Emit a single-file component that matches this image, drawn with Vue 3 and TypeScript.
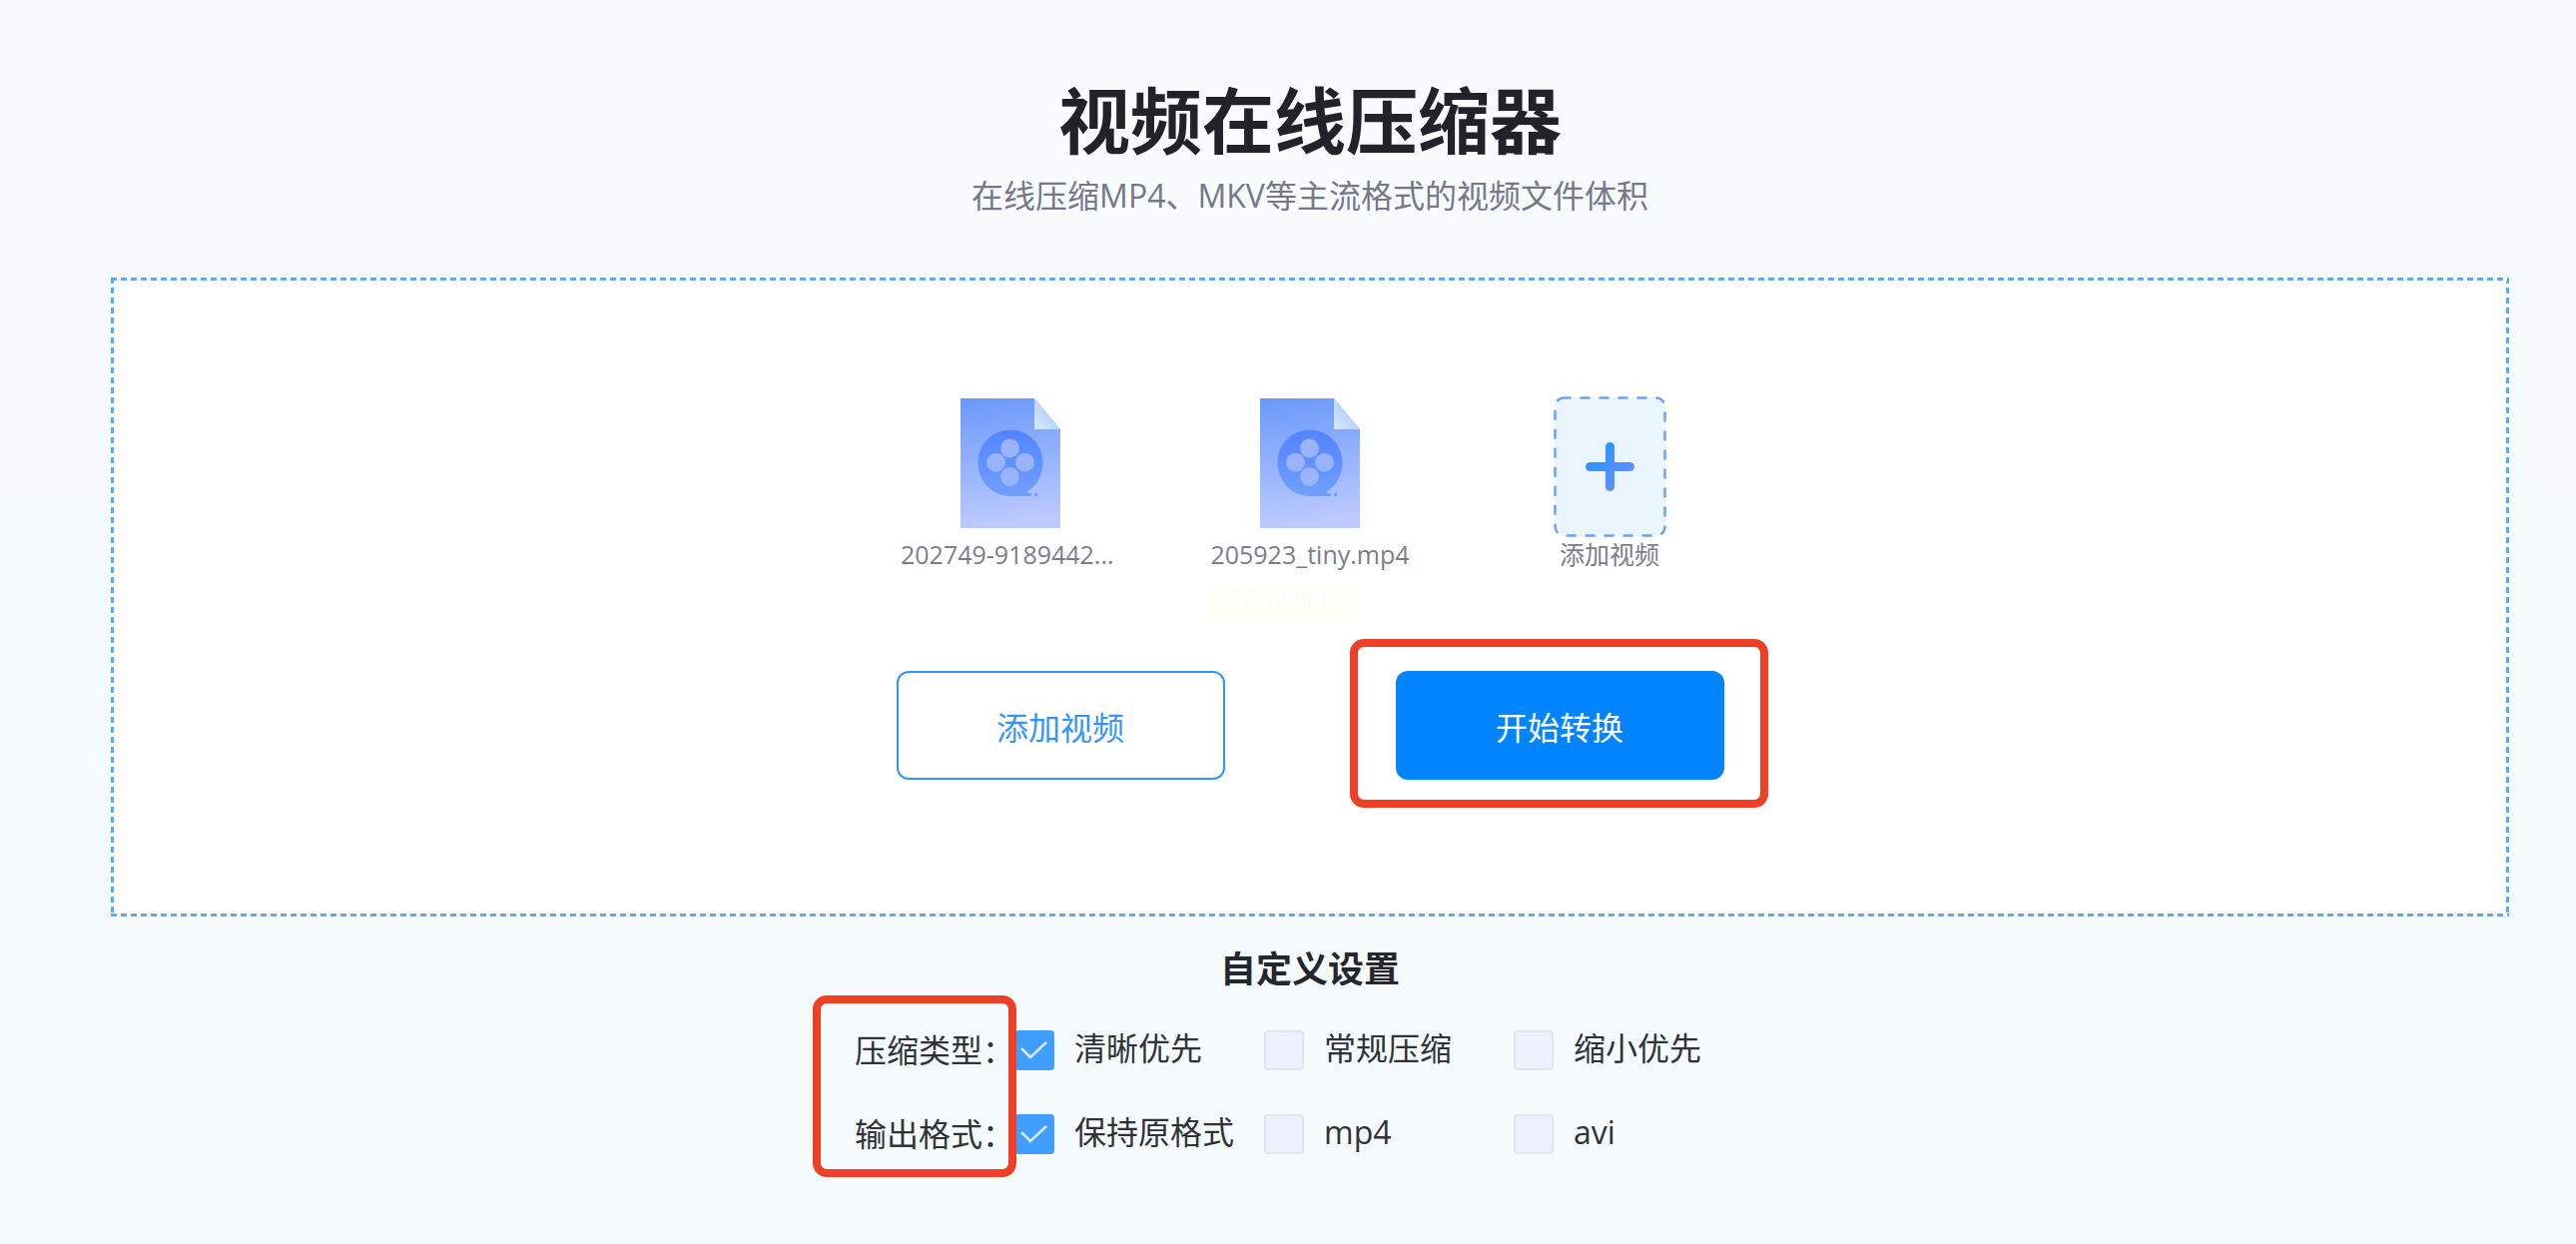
<script setup lang="ts">
import { reactive } from 'vue'

interface VideoFile {
  name: string
  cut?: boolean
  tag?: string
}

interface Setting {
  key: string
  label: string
  options: string[]
}

const files: VideoFile[] = [
  { name: '202749-9189442...', cut: true },
  { name: '205923_tiny.mp4', tag: '1772699088' },
]

const settings: Setting[] = [
  { key: 'type', label: '压缩类型：', options: ['清晰优先', '常规压缩', '缩小优先'] },
  { key: 'format', label: '输出格式：', options: ['保持原格式', 'mp4', 'avi'] },
]

const chosen = reactive<Record<string, string>>({
  type: '清晰优先',
  format: '保持原格式',
})
</script>

<template>
  <main class="page">
    <h1 class="title">视频在线压缩器</h1>
    <p class="subtitle">在线压缩MP4、MKV等主流格式的视频文件体积</p>

    <section class="drop">
      <ul class="files">
        <li v-for="file in files" :key="file.name" class="file">
          <div class="thumb">
            <svg class="doc" viewBox="0 0 100 130" aria-hidden="true">
              <defs>
                <linearGradient id="sheet" x1="0" y1="0" x2="0.1" y2="1">
                  <stop offset="0" stop-color="#6a99fa" />
                  <stop offset="1" stop-color="#bccaff" />
                </linearGradient>
                <linearGradient id="reel" x1="0" y1="0" x2="0" y2="1">
                  <stop offset="0" stop-color="#5384ff" />
                  <stop offset="1" stop-color="#709ffb" />
                </linearGradient>
                <linearGradient id="fold" x1="0" y1="1" x2="0.6" y2="0.4">
                  <stop offset="0" stop-color="#d9eaff" />
                  <stop offset="1" stop-color="#b4d0fd" />
                </linearGradient>
              </defs>
              <path d="M0 0H74L100 31V130H0Z" fill="url(#sheet)" />
              <path d="M74 0L100 31H74Z" fill="url(#fold)" />
              <path
                d="M50 31.500C68 31.500 82.500 46 82.500 64.500C82.500 77 76 88 66.500 93.500Q68 95.500 71 95.500V98H50C32 98 17.500 83 17.500 64.500C17.500 46 32 31.500 50 31.500Z"
                fill="url(#reel)"
              />
              <circle cx="75.500" cy="96.500" r="1.800" fill="#709ffb" />
              <g fill="#99b4fd">
                <circle cx="49.500" cy="50" r="9.400" />
                <circle cx="35.500" cy="64.200" r="9.400" />
                <circle cx="64.500" cy="64.200" r="9.400" />
                <circle cx="49.500" cy="78.500" r="9.400" />
              </g>
            </svg>
          </div>
          <span class="name" :class="{ cut: file.cut }">{{ file.name }}</span>
          <span v-if="file.tag" class="tag">{{ file.tag }}</span>
        </li>
        <li class="file">
          <button class="adder" type="button">
            <svg class="plus" viewBox="0 0 113 141" aria-hidden="true">
              <defs>
                <linearGradient id="cross" x1="32" y1="46" x2="81" y2="95" gradientUnits="userSpaceOnUse">
                  <stop offset="0.100" stop-color="#2196ff" />
                  <stop offset="0.900" stop-color="#6a8dff" />
                </linearGradient>
              </defs>
              <rect x="1" y="1" width="111" height="139" rx="10" fill="#eaf5ff" />
              <rect
                x="1.500" y="1.500" width="110" height="138" rx="9"
                fill="none" stroke="#66a3ff" stroke-width="2.500"
                stroke-dasharray="10 9" stroke-dashoffset="3"
              />
              <path
                d="M56.500 46a4.500 4.500 0 0 1 4.500 4.500V66H76.500a4.500 4.500 0 0 1 0 9H61V90.500a4.500 4.500 0 0 1-9 0V75H36.500a4.500 4.500 0 0 1 0-9H52V50.500a4.500 4.500 0 0 1 4.500-4.500Z"
                fill="url(#cross)"
              />
            </svg>
            <span class="name">添加视频</span>
          </button>
        </li>
      </ul>

      <div class="actions">
        <button class="btn" type="button">添加视频</button>
        <div class="marked">
          <button class="btn primary" type="button">开始转换</button>
          <span class="mark around-button"></span>
        </div>
      </div>
    </section>

    <h2 class="heading">自定义设置</h2>
    <div class="settings">
      <div v-for="row in settings" :key="row.key" class="row" role="group" :aria-labelledby="`${row.key}-label`">
        <span :id="`${row.key}-label`" class="row-label">{{ row.label }}</span>
        <label v-for="option in row.options" :key="option" class="option">
          <span class="box">
            <input
              type="checkbox"
              :checked="chosen[row.key] === option"
              @change="chosen[row.key] = option"
            />
            <svg v-if="chosen[row.key] === option" class="tick" viewBox="0 0 40 40" aria-hidden="true">
              <path d="M7 18L16 27L32 12" fill="none" stroke="#d6eaff" stroke-width="2.600" />
            </svg>
          </span>
          <span class="option-text">{{ option }}</span>
        </label>
      </div>
      <span class="mark around-labels"></span>
    </div>
  </main>
</template>

<style>
body {
  margin: 0;
  background: #f5fafd;
}
</style>

<style scoped>
.page {
  box-sizing: border-box;
  min-height: 100vh;
  padding: 72px 67px 64px 111px;
  display: flex;
  flex-direction: column;
  align-items: center;
  background: linear-gradient(#f8fcfd, #f4fafd);
  color: #303236;
  font-family: "Open Sans", "Noto Sans CJK SC", sans-serif;
  font-size: 32px;
  line-height: 40px;
}

.title {
  margin: 0;
  color: #222329;
  font-size: 72px;
  line-height: 96px;
  font-weight: 700;
}

.subtitle {
  margin: 8px 0 62px;
  color: #76788a;
}

.drop {
  box-sizing: border-box;
  width: 100%;
  padding: 119px 0 137px;
  display: flex;
  flex-direction: column;
  align-items: center;
  background:
    repeating-linear-gradient(90deg, #56aaff 0 6px, #ffffff 6px 10px) top / 100% 3px no-repeat,
    repeating-linear-gradient(90deg, #56aaff 0 6px, #ffffff 6px 10px) bottom / 100% 3px no-repeat,
    repeating-linear-gradient(#56aaff 0 6px, #ffffff 6px 10px) left / 3px 100% no-repeat,
    repeating-linear-gradient(#56aaff 0 6px, #ffffff 6px 10px) right / 3px 100% no-repeat,
    #ffffff;
}

.files {
  margin: 0;
  padding: 0;
  height: 275px;
  display: flex;
  list-style: none;
}

.file {
  width: 300px;
  display: flex;
  flex-direction: column;
  align-items: center;
}

.thumb {
  height: 141px;
}

.doc {
  display: block;
  width: 100px;
  height: 130px;
  margin-top: 2px;
}

.name {
  width: 220px;
  color: #7b7d8c;
  font-size: 25px;
  line-height: 34px;
  text-align: center;
}

.cut {
  text-align: left;
}

.tag {
  box-sizing: border-box;
  width: 166px;
  height: 38px;
  margin: 10px 0 0 46px;
  padding-left: 10px;
  align-self: flex-start;
  background: #fffffa;
  color: #fcfcf7;
  font-family: "Liberation Serif", serif;
  font-size: 26px;
  line-height: 38px;
}

.adder {
  padding: 0;
  border: 0;
  display: flex;
  flex-direction: column;
  align-items: center;
  background: none;
  font-family: inherit;
}

.plus {
  display: block;
  width: 113px;
  height: 141px;
}

.actions {
  display: flex;
  gap: 171px;
}

.btn {
  box-sizing: border-box;
  width: 329px;
  height: 109px;
  padding: 4px 0 0;
  border: 2px solid #2e97ff;
  border-radius: 12px;
  display: block;
  background: #ffffff;
  color: #3595ff;
  font-family: inherit;
  font-size: 32px;
  line-height: 40px;
}

.primary {
  border-color: #0084ff;
  background: #0084ff;
  color: #ffffff;
}

.marked {
  position: relative;
}

.mark {
  position: absolute;
  border: 8px solid #ee4026;
  border-radius: 14px;
  pointer-events: none;
}

.around-button {
  inset: -32px -44px -28px -46px;
}

.heading {
  margin: 29px 0 37px;
  color: #26272c;
  font-size: 36px;
  line-height: 48px;
  font-weight: 700;
}

.settings {
  position: relative;
  padding-right: 2px;
  display: flex;
  flex-direction: column;
  gap: 44px;
}

.around-labels {
  top: -35px;
  bottom: -23px;
  left: -42px;
  width: 188px;
}

.row {
  display: flex;
  align-items: center;
}

.row-label {
  width: 160px;
}

.option {
  width: 250px;
  display: flex;
  gap: 20px;
  white-space: nowrap;
}

.option-text {
  line-height: 36px;
}

.box {
  position: relative;
  width: 40px;
  height: 40px;
}

.box input {
  appearance: none;
  box-sizing: border-box;
  width: 40px;
  height: 40px;
  margin: 0;
  border: 2px solid #e1e4ec;
  border-radius: 4px;
  display: block;
  background: #edf1fd;
}

.box input:checked {
  border-color: #409eff;
  background: #409eff;
}

.tick {
  position: absolute;
  inset: 0;
  width: 40px;
  height: 40px;
  pointer-events: none;
}
</style>
